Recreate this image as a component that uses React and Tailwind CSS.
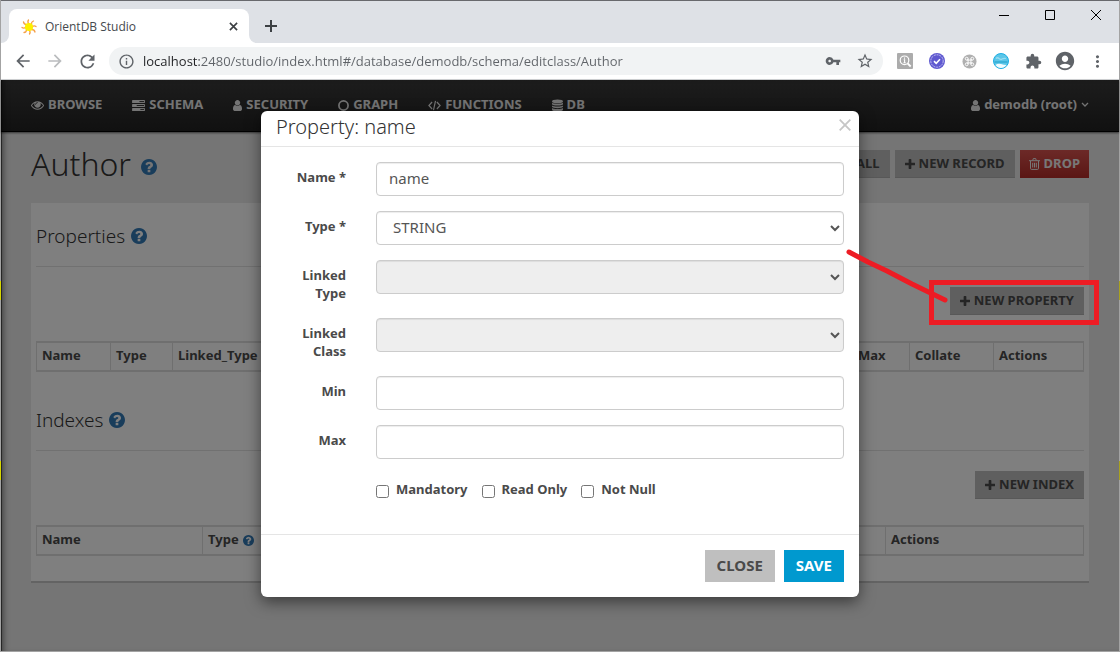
import React from "react";
import {
  MdArrowBack,
  MdArrowForward,
  MdRefresh,
  MdInfoOutline,
  MdVpnKey,
  MdStarBorder,
  MdExtension,
  MdAccountCircle,
  MdMoreVert,
} from "react-icons/md";

const PATHS = {
  eye: "M1664 960q-152-236-381-353 61 104 61 225 0 185-131.5 316.5t-316.5 131.5-316.5-131.5-131.5-316.5q0-121 61-225-229 117-381 353 133 205 333.5 326.5t434.5 121.5 434.5-121.5 333.5-326.5zm-720-384q0-20-14-34t-34-14q-125 0-214.5 89.5t-89.5 214.5q0 20 14 34t34 14 34-14 14-34q0-86 61-147t147-61q20 0 34-14t14-34zm848 384q0 34-20 69-140 230-376.5 368.5t-499.5 138.5-499.5-139-376.5-368q-20-35-20-69t20-69q140-229 376.5-368t499.5-139 499.5 139 376.5 368q20 35 20 69z",
  user: "M1536 1399q0 109-62.5 187t-150.5 78h-854q-88 0-150.5-78t-62.5-187q0-85 8.5-160.5t31.5-152 58.5-131 94-89 134.5-34.5q131 128 313 128t313-128q76 0 134.5 34.5t94 89 58.5 131 31.5 152 8.5 160.5zm-256-887q0 159-112.5 271.5t-271.5 112.5-271.5-112.5-112.5-271.5 112.5-271.5 271.5-112.5 271.5 112.5 112.5 271.5z",
  plus: "M1600 736v192q0 40-28 68t-68 28h-416v416q0 40-28 68t-68 28h-192q-40 0-68-28t-28-68v-416h-416q-40 0-68-28t-28-68v-192q0-40 28-68t68-28h416v-416q0-40 28-68t68-28h192q40 0 68 28t28 68v416h416q40 0 68 28t28 68z",
  help: "M1024 1376v-192q0-14-9-23t-23-9h-192q-14 0-23 9t-9 23v192q0 14 9 23t23 9h192q14 0 23-9t9-23zm256-672q0-88-55.5-163t-138.5-116-170-41q-243 0-371 213-15 24 8 42l132 100q7 6 19 6 16 0 25-12 53-68 86-92 34-24 86-24 48 0 85.5 26t37.5 59q0 38-20 61t-68 45q-63 28-115.5 86.5t-52.5 125.5v36q0 14 9 23t23 9h192q14 0 23-9t9-23q0-19 21.5-49.5t54.5-49.5q32-18 49-28.5t46-35 44.5-48 28-60.5 12.5-81zm384 192q0 209-103 385.5t-279.5 279.5-385.5 103-385.5-103-279.5-279.5-103-385.5 103-385.5 279.5-279.5 385.5-103 385.5 103 279.5 279.5 103 385.5z",
};

function Glyph({ name, box = "0 0 1792 1792", className }) {
  return (
    <svg viewBox={box} className={className} fill="currentColor" aria-hidden="true">
      <path d={PATHS[name]} />
    </svg>
  );
}

const UserIcon = () => <Glyph name="user" box="256 128 1280 1536" className="h-[11px] w-[9px]" />;
const PlusIcon = () => <Glyph name="plus" box="192 128 1408 1408" className="h-[10px] w-[10px]" />;

const TasksIcon = () => (
  <svg viewBox="0 0 14 12" className="h-[11px] w-[13px]" aria-hidden="true">
    <rect width="14" height="3.4" rx=".6" fill="currentColor" />
    <rect y="4.3" width="14" height="3.4" rx=".6" fill="currentColor" />
    <rect y="8.6" width="14" height="3.4" rx=".6" fill="currentColor" />
    <path d="M8 1.7h5M5 6h8M9 10.3h4" stroke="#2b2b2b" strokeWidth="1" />
  </svg>
);

const RingIcon = () => (
  <svg viewBox="0 0 12 12" className="h-[11px] w-[11px]" fill="none" aria-hidden="true">
    <circle cx="6" cy="6" r="5" stroke="currentColor" strokeWidth="1.9" />
  </svg>
);

const CodeIcon = () => (
  <svg viewBox="0 0 14 12" className="h-[11px] w-[13px]" fill="none" stroke="currentColor" strokeWidth="1.3" aria-hidden="true">
    <path d="M4.4 2.2.9 6l3.5 3.8M9.6 2.2 13.1 6 9.6 9.8M8.1 1 5.9 11" />
  </svg>
);

const DatabaseIcon = () => (
  <svg viewBox="0 0 12 13" className="h-[13px] w-[11px]" fill="currentColor" aria-hidden="true">
    <ellipse cx="6" cy="2" rx="6" ry="2" />
    <path d="M0 3.5c1.5 1.5 10.5 1.5 12 0V5c0 2-12 2-12 0zM0 6.4c1.5 1.5 10.5 1.5 12 0v1.5c0 2-12 2-12 0zM0 9.3c1.5 1.5 10.5 1.5 12 0V11c0 2.3-12 2.3-12 0z" />
  </svg>
);

const TrashIcon = () => (
  <svg viewBox="0 0 11 12" className="h-[12px] w-[11px]" fill="none" stroke="currentColor" aria-hidden="true">
    <path d="M0 2.7h11M3.7 2.5 4.3.6h2.4l.6 1.9M1.5 3v7.3q0 1.1 1 1.1h6q1 0 1-1.1V3M3.7 4.800v4.700M5.500 4.800v4.700M7.300 4.800v4.700" />
  </svg>
);

const NAV = [
  ["BROWSE", <Glyph name="eye" box="0 384 1792 1152" className="h-[9px] w-[13px]" />],
  ["SCHEMA", <TasksIcon />],
  ["SECURITY", <UserIcon />],
  ["GRAPH", <RingIcon />],
  ["FUNCTIONS", <CodeIcon />],
  ["DB", <DatabaseIcon />],
];

function Favicon() {
  return (
    <svg viewBox="0 0 16 16" className="h-4 w-4 shrink-0" aria-hidden="true">
      <g stroke="#f5a04a" strokeWidth="1.3" fill="none" strokeLinecap="round">
        <path d="M8 5Q6 3 7.500 1M10.500 5.500Q10 3 12.500 2M11 8q2-2 4-.5M10.500 10.500q3 0 3.500 2.500M8 11q2 2 .5 4M5.500 10.500q0 3-2.500 3M5 8Q3 10 1 8.500M5.500 5.500Q3 5.500 2.500 3" />
      </g>
      <circle cx="8" cy="8" r="4.1" fill="#fdf000" />
    </svg>
  );
}

function ToolButton({ label, children }) {
  return (
    <button aria-label={label} className="flex h-7 w-8 shrink-0 items-center justify-center text-[#5f6368]">
      {children}
    </button>
  );
}

function BrowserChrome() {
  return (
    <header className="font-['Open_Sans',sans-serif]">
      <div className="flex h-[43px] items-start border-t border-[#68696d] bg-[#dee1e6]">
        <div className="mt-2 flex h-[34px] w-2 items-end bg-white">
          <div className="h-full w-full rounded-br-lg bg-[#dee1e6]" />
        </div>
        <div className="mt-2 flex h-[34px] w-60 items-center rounded-t-lg bg-white pt-px pr-2 pl-3 text-xs text-[#45494d]">
          <Favicon />
          <span className="ml-2 flex-1">OrientDB Studio</span>
          <button aria-label="Close tab" className="flex h-4 w-4 items-center justify-center text-[#3c4043]">
            <svg viewBox="0 0 10 10" className="h-[9px] w-[9px]" stroke="currentColor" strokeWidth="1.8">
              <path d="m1 1 8 8M9 1 1 9" />
            </svg>
          </button>
        </div>
        <div className="mt-2 flex h-[34px] w-2 items-end bg-white">
          <div className="h-full w-full rounded-bl-lg bg-[#dee1e6]" />
        </div>
        <button aria-label="New tab" className="mt-[17px] ml-[6px] flex h-4 w-4 items-center justify-center text-[#3c4043]">
          <svg viewBox="0 0 12 12" className="h-3 w-3" stroke="currentColor" strokeWidth="2">
            <path d="M6 0v12M0 6h12" />
          </svg>
        </button>
        <div className="ml-auto flex text-black">
          <button aria-label="Minimize" className="flex h-7 w-[46px] items-center justify-center">
            <svg viewBox="0 0 10 10" className="h-[10px] w-[10px]" stroke="currentColor">
              <path d="M0 5.500h10" />
            </svg>
          </button>
          <button aria-label="Maximize" className="flex h-7 w-[46px] items-center justify-center">
            <svg viewBox="0 0 10 10" className="h-[10px] w-[10px]" stroke="currentColor" fill="none">
              <path d="M.5.5h9v9h-9z" />
            </svg>
          </button>
          <button aria-label="Close" className="flex h-7 w-[46px] items-center justify-center">
            <svg viewBox="0 0 10 10" className="h-[10px] w-[10px]" stroke="currentColor">
              <path d="m0 0 10 10M10 0 0 10" />
            </svg>
          </button>
        </div>
      </div>
      <div className="flex h-[37px] items-center border-b border-[#d3d5d8] bg-white px-[6px]">
        <ToolButton label="Back"><MdArrowBack size={20} /></ToolButton>
        <button aria-label="Forward" className="flex h-7 w-8 shrink-0 items-center justify-center text-[#babcbe]">
          <MdArrowForward size={20} />
        </button>
        <ToolButton label="Reload"><MdRefresh size={21} /></ToolButton>
        <div className="mx-[6px] flex h-7 flex-1 items-center rounded-full bg-[#f1f3f4] pr-[2px] pl-[9px]">
          <MdInfoOutline size={17} className="shrink-0 text-[#5f6368]" />
          <input
            aria-label="Address"
            defaultValue="localhost:2480/studio/index.html#/database/demodb/schema/editclass/Author"
            className="ml-2 min-w-0 flex-1 bg-[linear-gradient(90deg,#202124_56px,#5f6368_56px)] bg-clip-text pt-px text-[13px] text-transparent outline-none"
          />
          <ToolButton label="Saved password"><MdVpnKey size={16} /></ToolButton>
          <ToolButton label="Bookmark"><MdStarBorder size={18} /></ToolButton>
        </div>
        <ToolButton label="Inspector">
          <svg viewBox="0 0 16 16" className="h-4 w-4" fill="none" stroke="#fff">
            <rect width="16" height="16" rx="1" fill="#acacac" stroke="none" />
            <circle cx="7.5" cy="7.3" r="4.3" strokeWidth="1.2" />
            <path d="m10.700 10.500 3 3" strokeWidth="1.8" />
            <path d="M7.500 4.500v1.200M6.700 6.800h.9v3M6.500 9.800h2.200" strokeWidth="1.1" />
          </svg>
        </ToolButton>
        <ToolButton label="Checker">
          <svg viewBox="0 0 16 16" className="h-4 w-4" fill="none">
            <circle cx="8" cy="8" r="8" fill="#5f59d0" />
            <circle cx="8" cy="8" r="6.2" stroke="#c9c7f3" strokeWidth=".9" strokeDasharray="2 .8" />
            <path d="m5 8.200 2.200 2.100L11 6.200" stroke="#fff" strokeWidth="1.6" />
          </svg>
        </ToolButton>
        <ToolButton label="Shortcuts">
          <svg viewBox="0 0 16 16" className="h-[15px] w-[15px]" fill="none">
            <circle cx="8" cy="8" r="7.5" fill="#b0b0b0" />
            <g stroke="#fff" strokeWidth="1">
              <path d="M6.500 5v6M9.500 5v6M5 6.500h6M5 9.500h6" />
              <circle cx="5" cy="5" r="1.5" />
              <circle cx="11" cy="5" r="1.5" />
              <circle cx="5" cy="11" r="1.5" />
              <circle cx="11" cy="11" r="1.5" />
            </g>
          </svg>
        </ToolButton>
        <ToolButton label="Profile extension">
          <svg viewBox="0 0 16 16" className="h-4 w-4" fill="none">
            <circle cx="8" cy="8" r="7.5" fill="#5cc6e8" stroke="#1daee3" />
            <path d="M3 5.500q1.500-1.500 3 0t3 .5 4-.5" stroke="#9adcf0" strokeWidth="1.2" />
            <path d="M1.500 9h13" stroke="#2fa9d3" strokeWidth="1.4" />
            <path d="M2.500 12q2.500-2 5.500-1t5.500 1q-2 3-5.500 3t-5.500-3z" fill="#f3fbfe" />
          </svg>
        </ToolButton>
        <ToolButton label="Extensions"><MdExtension size={17} /></ToolButton>
        <ToolButton label="Account"><MdAccountCircle size={22} /></ToolButton>
        <ToolButton label="Menu"><MdMoreVert size={19} /></ToolButton>
      </div>
    </header>
  );
}

function GreyButton({ children }) {
  return (
    <button className="flex h-7 items-center gap-1 border-b border-[#b0b0b0] bg-[#bfbfbf] px-[10px] text-[13px] font-bold whitespace-nowrap text-[#4a4a4a]">
      {children}
    </button>
  );
}

function SectionTitle({ children }) {
  return (
    <h2 className="flex h-[35px] items-start gap-[6px] text-[19px] leading-6 font-light text-[#333]">
      {children}
      <Glyph name="help" box="128 128 1536 1536" className="mt-1 h-4 w-4 text-[#337ab7]" />
    </h2>
  );
}

const TH = "border-x border-y-2 border-[#dedede] px-[5px] pt-0 pb-px h-[29px] text-left font-bold";
const TABLE = "w-full table-fixed border-collapse text-[13px] text-[#4a4a4a]";

function Callout() {
  return (
    <svg
      viewBox="0 0 260 80"
      className="pointer-events-none absolute -top-[39px] -right-[16px] z-50 h-20 w-[260px] max-w-none"
      fill="none"
      stroke="#ed1c24"
      strokeWidth="5"
      aria-hidden="true"
    >
      <path d="M91.500 34.500h165v40h-165z" />
      <path d="m9 4 19 10 19 9 25 13 33 16" strokeLinecap="round" strokeLinejoin="round" />
    </svg>
  );
}

function SchemaPage() {
  return (
    <div className="min-h-full bg-[#ebebeb]">
      <nav className="flex h-[52px] items-center gap-[30px] border-b border-black bg-linear-to-b from-[#3a3a3a] to-[#222] px-[30px] pb-px text-[13px] font-bold text-[#e8e8e8] shadow-[0_1px_2px_#666]">
        {NAV.map(([label, icon]) => (
          <a key={label} href="#" className="flex items-center gap-1">
            {icon}
            {label}
          </a>
        ))}
        <a href="#" className="ml-auto flex items-center gap-1">
          <UserIcon />
          demodb (root)
          <svg viewBox="0 0 8 6" className="h-[6px] w-2" fill="none" stroke="currentColor" strokeWidth="1.3">
            <path d="m1 1 3 3 3-3" />
          </svg>
        </a>
      </nav>
      <main className="px-[30px] pt-3">
        <div className="flex h-[59px] items-start justify-between">
          <h1 className="flex items-center gap-[10px] text-[32px] leading-10 font-light text-[#333]">
            Author
            <Glyph name="help" box="128 128 1536 1536" className="mt-[6px] h-4 w-4 text-[#337ab7]" />
          </h1>
          <div className="mt-[6px] flex gap-[5px]">
            <GreyButton>ALL</GreyButton>
            <GreyButton><PlusIcon />NEW RECORD</GreyButton>
            <button className="flex h-7 items-center gap-1 bg-linear-to-b from-[#d9534f] to-[#b52b27] px-[9px] text-[13px] font-bold text-[#f0f0f0]">
              <TrashIcon />DROP
            </button>
          </div>
        </div>
        <div className="border-b-2 border-[#c6c6c6] bg-white px-[5px] pt-[21px] pb-[25px]">
          <div className="h-[43px] border-b border-[#e2e2e2]">
            <SectionTitle>Properties</SectionTitle>
          </div>
          <div className="mt-5 flex justify-end">
            <div className="relative">
              <GreyButton><PlusIcon />NEW PROPERTY</GreyButton>
              <Callout />
            </div>
          </div>
          <table className={TABLE + " mt-[26px]"}>
            <colgroup>
              <col className="w-[74px]" />
              <col className="w-[62px]" />
              <col />
              <col className="w-[57px]" />
              <col className="w-[84px]" />
              <col className="w-[90px]" />
            </colgroup>
            <thead>
              <tr>
                <th className={TH}>Name</th>
                <th className={TH}>Type</th>
                <th className={TH}>Linked_Type</th>
                <th className={TH}>Max</th>
                <th className={TH}>Collate</th>
                <th className={TH}>Actions</th>
              </tr>
            </thead>
          </table>
          <div className="mt-9 h-[43px] border-b border-[#e2e2e2]">
            <SectionTitle>Indexes</SectionTitle>
          </div>
          <div className="mt-5 flex justify-end">
            <GreyButton><PlusIcon />NEW INDEX</GreyButton>
          </div>
          <table className={TABLE + " mt-[26px]"}>
            <colgroup>
              <col className="w-[166px]" />
              <col />
              <col className="w-[198px]" />
            </colgroup>
            <thead>
              <tr>
                <th className={TH}>Name</th>
                <th className={TH}>
                  <span className="flex items-center gap-1">
                    Type
                    <Glyph name="help" box="128 128 1536 1536" className="h-[11px] w-[11px] text-[#337ab7]" />
                  </span>
                </th>
                <th className={TH}>Actions</th>
              </tr>
            </thead>
          </table>
        </div>
      </main>
    </div>
  );
}

const CONTROL =
  "block h-[34px] w-full rounded border border-[#ccc] px-3 pb-[2px] text-[15px] text-[#555] shadow-[inset_0_1px_1px_rgba(0,0,0,0.075)]";

function Field({ id, label, children }) {
  return (
    <div className="mb-[15px] grid grid-cols-[70px_1fr] gap-[30px]">
      <label htmlFor={id} className="pt-[6px] pb-px text-right font-bold">
        {label}
      </label>
      {children}
    </div>
  );
}

function PropertyDialog() {
  return (
    <div className="absolute inset-0 z-40 flex items-start justify-center bg-black/50 pt-[31px] shadow-[inset_1px_0_0_rgba(0,0,0,0.5),inset_6px_0_6px_-4px_rgba(0,0,0,0.5)]">
      <form
        role="dialog"
        aria-labelledby="dialog-title"
        onSubmit={(e) => e.preventDefault()}
        className="w-[598px] max-w-full rounded-md bg-white text-[13px] leading-[18px] text-[#4a4a4a] shadow-[0_5px_15px_rgba(0,0,0,0.5)]"
      >
        <div className="flex h-9 items-start justify-between border-b border-[#e5e5e5] pr-2 pl-[15px]">
          <h2 id="dialog-title" className="pt-1 text-[20px] leading-6 font-light text-[#333]">
            Property: name
          </h2>
          <button type="button" aria-label="Close dialog" className="mt-2 flex h-3 w-3 items-center justify-center text-[#c6c6c6]">
            <svg viewBox="0 0 12 12" className="h-3 w-3" stroke="currentColor" strokeWidth="1.8">
              <path d="m.7.7 10.600 10.600M11.300.7.7 11.300" />
            </svg>
          </button>
        </div>
        <div className="px-[15px] pt-[15px] pb-[34px]">
          <Field id="name" label="Name *">
            <input id="name" defaultValue="name" className={CONTROL} />
          </Field>
          <Field id="type" label="Type *">
            <select id="type" className={CONTROL + " bg-white"}>
              <option>STRING</option>
            </select>
          </Field>
          <Field id="linked-type" label="Linked Type">
            <select id="linked-type" disabled className={CONTROL + " bg-[#eee] opacity-100"} />
          </Field>
          <Field id="linked-class" label="Linked Class">
            <select id="linked-class" disabled className={CONTROL + " bg-[#eee] opacity-100"} />
          </Field>
          <Field id="min" label="Min">
            <input id="min" className={CONTROL} />
          </Field>
          <Field id="max" label="Max">
            <input id="max" className={CONTROL} />
          </Field>
          <div className="mt-[21px] flex gap-[14px] pl-[100px]">
            {["Mandatory", "Read Only", "Not Null"].map((label) => (
              <label key={label} className="flex h-5 items-start gap-[7px] font-bold">
                <input type="checkbox" className="mt-[5px] h-[13px] w-[13px]" />
                {label}
              </label>
            ))}
          </div>
        </div>
        <div className="flex justify-end gap-[9px] border-t border-[#e5e5e5] p-[15px] text-[15px] font-bold">
          <button type="button" className="h-8 bg-[#bfbfbf] px-3 pb-[2px] text-[#4a4a4a]">CLOSE</button>
          <button type="submit" className="h-8 bg-[#0099cf] px-3 pb-[2px] text-white">SAVE</button>
        </div>
      </form>
    </div>
  );
}

export default function App() {
  return (
    <div className="relative flex min-h-screen flex-col border-x border-b border-[#a3a3a3] bg-white font-['Noto_Sans',sans-serif]">
      <BrowserChrome />
      <div className="relative grid flex-1">
        <SchemaPage />
        <PropertyDialog />
      </div>
      <div className="absolute top-[281px] -left-px h-[19px] w-px bg-[#d6d600]" />
      <div className="absolute top-[461px] -left-px h-[19px] w-px bg-[#d6d600]" />
      <div className="absolute top-[281px] -right-px h-[19px] w-px bg-[#a8a020]" />
      <div className="absolute top-[461px] -right-px h-[19px] w-px bg-[#a8a020]" />
    </div>
  );
}
